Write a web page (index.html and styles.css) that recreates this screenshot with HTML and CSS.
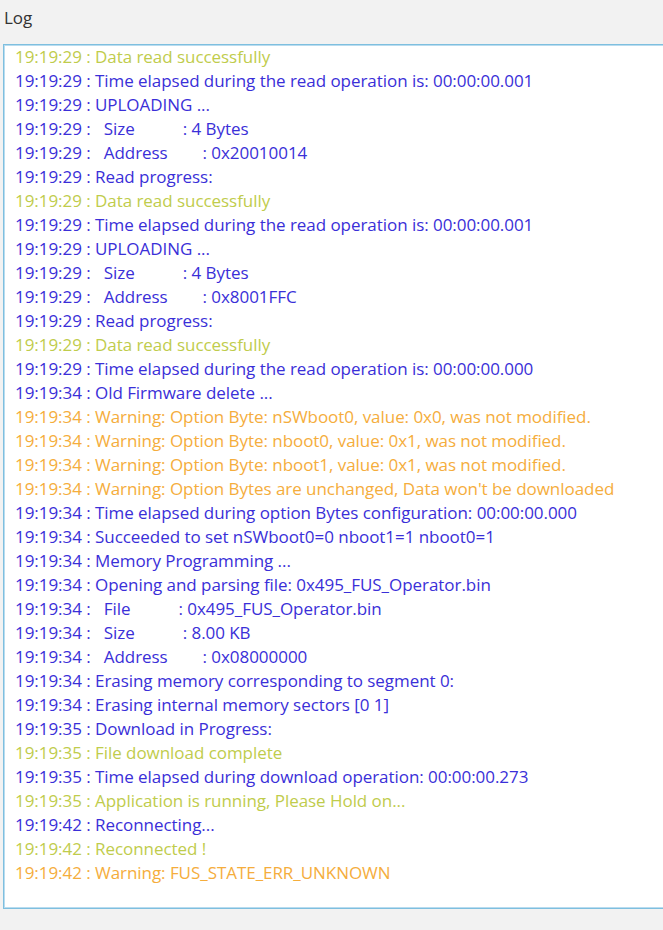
FILE: index.html
```html
<!DOCTYPE html>
<html>
<head>
<meta charset="utf-8">
<link rel="stylesheet" href="styles.css">
</head>
<body>
<div class="panel">
  <div class="title">Log</div>
  <div class="log">
    <div class="ok">19:19:29 : Data read successfully</div>
    <div class="info">19:19:29 : Time elapsed during the read operation is: 00:00:00.001</div>
    <div class="info">19:19:29 : UPLOADING ...</div>
    <div class="info">19:19:29 :   Size           : 4 Bytes</div>
    <div class="info">19:19:29 :   Address        : 0x20010014</div>
    <div class="info">19:19:29 : Read progress:</div>
    <div class="ok">19:19:29 : Data read successfully</div>
    <div class="info">19:19:29 : Time elapsed during the read operation is: 00:00:00.001</div>
    <div class="info">19:19:29 : UPLOADING ...</div>
    <div class="info">19:19:29 :   Size           : 4 Bytes</div>
    <div class="info">19:19:29 :   Address        : 0x8001FFC</div>
    <div class="info">19:19:29 : Read progress:</div>
    <div class="ok">19:19:29 : Data read successfully</div>
    <div class="info">19:19:29 : Time elapsed during the read operation is: 00:00:00.000</div>
    <div class="info">19:19:34 : Old Firmware delete ...</div>
    <div class="warn">19:19:34 : Warning: Option Byte: nSWboot0, value: 0x0, was not modified.</div>
    <div class="warn">19:19:34 : Warning: Option Byte: nboot0, value: 0x1, was not modified.</div>
    <div class="warn">19:19:34 : Warning: Option Byte: nboot1, value: 0x1, was not modified.</div>
    <div class="warn">19:19:34 : Warning: Option Bytes are unchanged, Data won't be downloaded</div>
    <div class="info">19:19:34 : Time elapsed during option Bytes configuration: 00:00:00.000</div>
    <div class="info">19:19:34 : Succeeded to set nSWboot0=0 nboot1=1 nboot0=1</div>
    <div class="info">19:19:34 : Memory Programming ...</div>
    <div class="info">19:19:34 : Opening and parsing file: 0x495_FUS_Operator.bin</div>
    <div class="info">19:19:34 :   File           : 0x495_FUS_Operator.bin</div>
    <div class="info">19:19:34 :   Size           : 8.00 KB</div>
    <div class="info">19:19:34 :   Address        : 0x08000000</div>
    <div class="info">19:19:34 : Erasing memory corresponding to segment 0:</div>
    <div class="info">19:19:34 : Erasing internal memory sectors [0 1]</div>
    <div class="info">19:19:35 : Download in Progress:</div>
    <div class="ok">19:19:35 : File download complete</div>
    <div class="info">19:19:35 : Time elapsed during download operation: 00:00:00.273</div>
    <div class="ok">19:19:35 : Application is running, Please Hold on...</div>
    <div class="info">19:19:42 : Reconnecting...</div>
    <div class="ok">19:19:42 : Reconnected !</div>
    <div class="warn">19:19:42 : Warning: FUS_STATE_ERR_UNKNOWN</div>
  </div>
</div>
</body>
</html>
```
FILE: styles.css
```css
html, body {
  margin: 0;
  padding: 0;
  background: #f2f2f2;
  overflow: hidden;
}
body {
  width: 663px;
  height: 930px;
  font-family: "Open Sans", "Noto Sans", sans-serif;
}
.panel {
  display: flex;
  flex-direction: column;
  padding: 0 0 0 3px;
}
.title {
  height: 44px;
  line-height: 36px;
  font-size: 17px;
  color: #333;
  padding-left: 1px;
}
.log {
  background: #fff;
  border: 1px solid #7ebfdf;
  box-shadow: inset 0 0 0 1px #b9dcef;
  margin-right: -20px;
  height: 865px;
  box-sizing: border-box;
  padding: 0 0 0 11px;
  font-size: 17px;
  line-height: 24px;
  letter-spacing: -0.05px;
}
.log > div {
  white-space: pre;
}
.ok { color: #bfcc4c; }
.info { color: #3a2fd8; }
.warn { color: #f5ad3c; }
```
